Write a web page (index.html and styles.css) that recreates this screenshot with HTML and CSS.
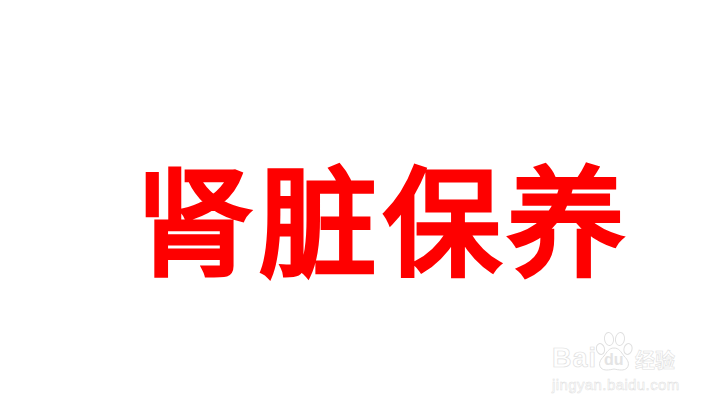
FILE: index.html
```html
<!DOCTYPE html>
<html lang="zh">
<head>
<meta charset="utf-8">
<title>肾脏保养</title>
<link rel="stylesheet" href="styles.css">
</head>
<body>
<main class="canvas">
  <h1 class="title">肾脏保养</h1>
  <div class="mark">
    <div class="mark-top">
      <span class="bai">Bai</span>
      <div class="paw-wrap">
        <svg class="paw" viewBox="0 0 38 40" aria-hidden="true">
          <ellipse cx="5.5" cy="18" rx="4" ry="5.5" transform="rotate(-15 5.5 18)"/>
          <ellipse cx="14" cy="8" rx="4.5" ry="6.5" transform="rotate(-8 14 8)"/>
          <ellipse cx="25" cy="8" rx="4.5" ry="6.5" transform="rotate(8 25 8)"/>
          <ellipse cx="33" cy="18" rx="4" ry="5.5" transform="rotate(15 33 18)"/>
          <path d="M19 17c-5 0-7 4-10 8-4 4-6 8-3 12 3 3 8 2 13 1 5 1 10 2 13-1 3-4 1-8-3-12-3-4-5-8-10-8z"/>
        </svg>
        <span class="du">du</span>
      </div>
      <span class="jy">经验</span>
    </div>
    <div class="url">jingyan.baidu.com</div>
  </div>
</main>
</body>
</html>
```
FILE: styles.css
```css
html, body { margin: 0; padding: 0; background: #fff; }
.canvas { position: relative; width: 719px; height: 408px; overflow: hidden; background: #fff; }
.title {
  margin: 0;
  padding: 147px 0 0 135px;
  font: 400 118px/1.15 "Noto Sans CJK SC", "Noto Sans CJK JP", sans-serif;
  letter-spacing: 6px;
  color: #fe0000;
  -webkit-text-stroke: 5px #fe0000;
  paint-order: stroke fill;
  white-space: nowrap;
}
.mark { position: absolute; left: 552px; top: 330px; width: 130px; font-family: "Liberation Sans", sans-serif; color: #fff; }
.mark-top { display: flex; align-items: flex-end; height: 41px; }
.bai { font-size: 27px; line-height: 25px; font-weight: 700; letter-spacing: 1px; width: 43px; -webkit-text-stroke: .7px #e0e0e0; }
.paw-wrap { position: relative; width: 38px; height: 40px; flex: none; }
.paw { display: block; width: 38px; height: 40px; fill: #fff; stroke: #e0e0e0; stroke-width: 1; }
.du { position: absolute; left: 9px; top: 20px; font-size: 16px; line-height: 17px; font-weight: 700; color: #e4e4e4; }
.jy { font: 700 20px/22px "Noto Sans CJK SC", sans-serif; margin-left: 2px; white-space: nowrap; -webkit-text-stroke: .6px #e0e0e0; }
.url { margin-top: 6px; font-size: 15px; line-height: 16px; letter-spacing: .4px; white-space: nowrap; -webkit-text-stroke: .5px #e0e0e0; }
```
